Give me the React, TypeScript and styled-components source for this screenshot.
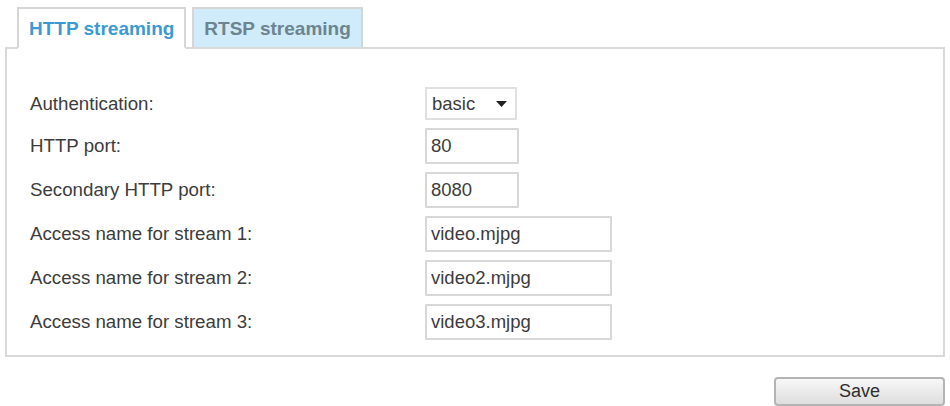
import React from "react";
import styled, { createGlobalStyle } from "styled-components";

const Global = createGlobalStyle`
  html, body { margin: 0; padding: 0; background: #ffffff; }
  body { font-family: "Liberation Sans", Arial, sans-serif; }
`;

const Page = styled.div`
  width: 950px;
  box-sizing: border-box;
  padding: 7px 5px 0 5px;
`;

const TabBar = styled.div`
  display: flex;
  gap: 6px;
  padding-left: 12px;
  margin-bottom: -2px;
  position: relative;
  z-index: 1;
`;

const Tab = styled.div<{ $active?: boolean }>`
  box-sizing: border-box;
  height: 42px;
  display: flex;
  align-items: center;
  padding: 2px 10px 0 10px;
  border: 2px solid #d6d6d6;
  border-bottom: 2px solid ${(p) => (p.$active ? "#ffffff" : "#d9d9d9")};
  background: ${(p) => (p.$active ? "#ffffff" : "#d0ebfa")};
  color: ${(p) => (p.$active ? "#3a9ad2" : "#6d8490")};
  font-weight: bold;
  font-size: 19px;
  white-space: nowrap;
`;

const Panel = styled.div`
  box-sizing: border-box;
  border: 2px solid #d9d9d9;
  padding: 38px 0 15px 23px;
`;

const Form = styled.div`
  display: grid;
  grid-template-columns: 395px auto;
  row-gap: 8px;
  align-items: center;
`;

const Label = styled.div`
  font-size: 18.7px;
  color: #3c3c3c;
`;

const Field = styled.input<{ $wide?: boolean }>`
  box-sizing: border-box;
  width: ${(p) => (p.$wide ? "187px" : "94px")};
  height: 36px;
  border: 2px solid #d8d8d8;
  border-radius: 1px;
  padding: 0 4px;
  font-family: "Liberation Sans", Arial, sans-serif;
  font-size: 18.5px;
  color: #3c3c3c;
  background: #fff;
  outline: none;
`;

const SelectBox = styled.div`
  box-sizing: border-box;
  width: 92px;
  height: 33px;
  border: 2px solid #e0e0e0;
  display: flex;
  align-items: center;
  justify-content: space-between;
  padding: 0 8px 0 5px;
  font-size: 18.5px;
  color: #3c3c3c;
`;

const Footer = styled.div`
  display: flex;
  justify-content: flex-end;
  padding: 20px 0 0 0;
`;

const SaveButton = styled.button`
  box-sizing: border-box;
  width: 171px;
  height: 29px;
  border: 2px solid #b4b4b4;
  border-radius: 4px;
  background: linear-gradient(#f7f7f7, #dedede);
  font-family: "Liberation Sans", Arial, sans-serif;
  font-size: 18px;
  color: #2e2e2e;
  padding: 0;
`;

const Caret = () => (
  <svg width="11" height="6" viewBox="0 0 11 6">
    <path d="M0 0 H11 L5.5 6 Z" fill="#222" />
  </svg>
);

export default function App() {
  return (
    <Page>
      <Global />
      <TabBar>
        <Tab $active>HTTP streaming</Tab>
        <Tab>RTSP streaming</Tab>
      </TabBar>
      <Panel>
        <Form>
          <Label>Authentication:</Label>
          <SelectBox>
            <span>basic</span>
            <Caret />
          </SelectBox>
          <Label>HTTP port:</Label>
          <Field defaultValue="80" />
          <Label>Secondary HTTP port:</Label>
          <Field defaultValue="8080" />
          <Label>Access name for stream 1:</Label>
          <Field $wide defaultValue="video.mjpg" />
          <Label>Access name for stream 2:</Label>
          <Field $wide defaultValue="video2.mjpg" />
          <Label>Access name for stream 3:</Label>
          <Field $wide defaultValue="video3.mjpg" />
        </Form>
      </Panel>
      <Footer>
        <SaveButton>Save</SaveButton>
      </Footer>
    </Page>
  );
}
